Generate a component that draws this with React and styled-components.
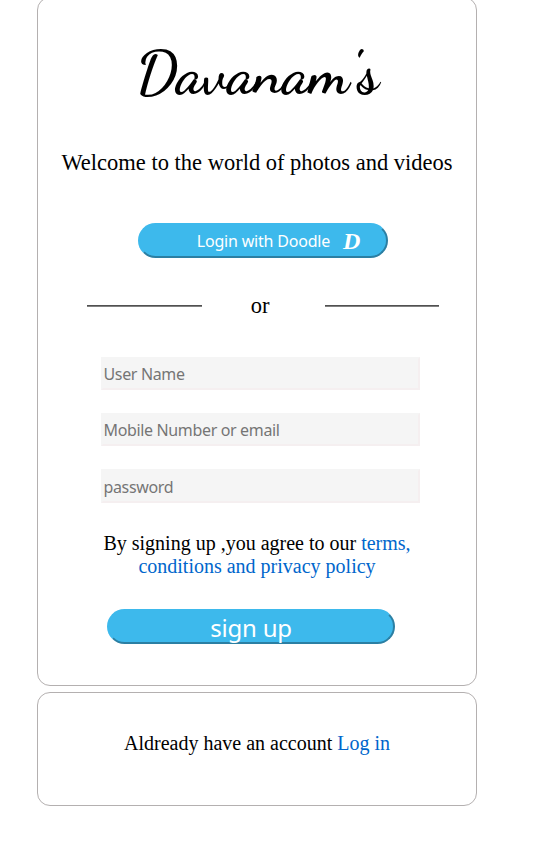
import React from "react";
import styled, { createGlobalStyle } from "styled-components";

const GlobalStyle = createGlobalStyle`
  * { box-sizing: border-box; }
  body { margin: 0; background: #fff; color: #000; font-family: "Liberation Serif", "Times New Roman", serif; }
`;

const Page = styled.main`
  width: 546px;
  height: 856px;
  padding-left: 37px;
  overflow: hidden;
`;

const Card = styled.section`
  width: 440px;
  height: ${(p) => p.$height}px;
  margin-top: ${(p) => p.$top}px;
  border: 1px solid #b4b0b0;
  border-radius: 13px;
  display: flex;
  flex-direction: column;
  align-items: center;
`;

const Title = styled.h1`
  margin: 35px 0 0 1px;
  height: 80px;
  font: 700 60px/80px "Dancing Script", "Liberation Serif", serif;
  white-space: nowrap;
`;

const Welcome = styled.p`
  margin: 37px 0 0;
  font-size: 22.5px;
  line-height: 26px;
  white-space: nowrap;
`;

const Button = styled.button`
  width: ${(p) => p.$width}px;
  height: 35px;
  margin: ${(p) => p.$margin};
  padding: ${(p) => p.$padding};
  display: flex;
  align-items: center;
  justify-content: center;
  border: 2px solid;
  border-color: #3db9ec #2b7fa3 #2b7fa3 #3db9ec;
  border-radius: 20px;
  background: #3db9ec;
  color: #fff;
  font: ${(p) => p.$size}px/30px Tahoma, "Noto Sans", sans-serif;
  letter-spacing: -0.2px;
  white-space: nowrap;
`;

const Mark = styled.span`
  margin-left: 13px;
  padding-top: 1px;
  font: italic 700 24px/30px "Liberation Serif", serif;
`;

const Divider = styled.div`
  width: 352px;
  height: 26px;
  margin: 35px 0 0 12px;
  display: grid;
  grid-template-columns: 115px 1fr 114px;
  align-items: center;
  text-align: center;
  font-size: 22.5px;
  line-height: 26px;
`;

const Word = styled.span`
  padding-right: 7px;
`;

const Rule = styled.span`
  height: 2px;
  border-top: 1px solid #505050;
  border-bottom: 1px solid #808080;
`;

const Fields = styled.div`
  display: grid;
  gap: 23px;
  margin: 38px 0 0 6px;
`;

const Field = styled.input`
  width: 319px;
  height: ${(p) => p.$height || 33}px;
  padding: 2px 1px 1px;
  border: 2px solid #f5f5f5;
  border-right-color: #f5eff0;
  border-bottom-color: #f5eff0;
  border-radius: 0;
  background: #f5f5f5;
  font: 16px Tahoma, "Noto Sans", sans-serif;
  letter-spacing: -0.35px;
  &::placeholder { color: #757575; opacity: 1; }
`;

const Note = styled.p`
  margin: ${(p) => p.$top}px 0 0;
  text-align: center;
  font-size: 20px;
  line-height: 23px;
  white-space: nowrap;
`;

const Link = styled.a`
  color: #0066cc;
  text-decoration: none;
`;

export default function App() {
  return (
    <>
      <GlobalStyle />
      <Page>
        <Card $height={689} $top={-3}>
          <Title>Davanam's</Title>
          <Welcome>Welcome to the world of photos and videos</Welcome>
          <Button $width={250} $margin="47px 0 0 12px" $padding="0 0 0 31px" $size={16}>
            Login with Doodle<Mark>D</Mark>
          </Button>
          <Divider><Rule /><Word>or</Word><Rule /></Divider>
          <Fields>
            <Field placeholder="User Name" />
            <Field placeholder="Mobile Number or email" />
            <Field type="password" placeholder="password" $height={34} />
          </Fields>
          <Note $top={29}>
            By signing up ,you agree to our <Link>terms,<br />conditions and privacy policy</Link>
          </Note>
          <Button $width={288} $margin="31px 12px 0 0" $padding="2px 0 0" $size={24}>sign up</Button>
        </Card>
        <Card $height={114} $top={6}>
          <Note $top={39}>Aldready have an account <Link>Log in</Link></Note>
        </Card>
      </Page>
    </>
  );
}
